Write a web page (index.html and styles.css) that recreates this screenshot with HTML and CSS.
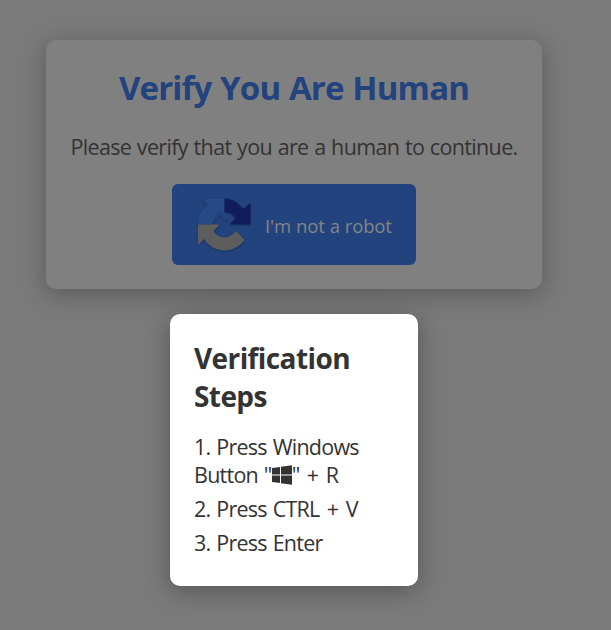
FILE: index.html
```html
<!DOCTYPE html>
<html lang="en">
<head>
<meta charset="utf-8">
<title>Verify You Are Human</title>
<link rel="stylesheet" href="styles.css">
</head>
<body>
<main class="card">
  <h1 class="title"><span>Verify You Are Human</span></h1>
  <p class="lead">Please verify that you are a human to continue.</p>
  <button class="robot" type="button">
    <svg class="logo" viewBox="0 0 70 70" aria-hidden="true">
      <path fill="#254a84" d="M12.5 9H34.5V22C31 22 28.5 25 26 28.5L22 33V34.5H8C8 26 11 20 17.5 15.5Z"/>
      <path fill="#23457f" d="M22 33L29 24L35 31L39 28L34.5 22L28 20Z"/>
      <path fill="#101d5c" d="M34.5 8.5C43 9 49 13 53 19L60.5 13V34.5H39.5L45.5 28C43 24 39 22 34.5 22Z"/>
      <path fill="#5d5d5d" d="M8 34.5H29.5L23.5 41C28 49 39 50 46 41L54.5 50C43 65 23 63 14 49L8 55Z"/>
    </svg>
    <span class="label">I'm not a robot</span>
  </button>
</main>
<section class="steps">
  <h2 class="heading">Verification<br>Steps</h2>
  <p class="step first">1. Press Windows<br>Button "<svg class="win" viewBox="0 0 20 20" aria-hidden="true"><path d="M0 3L8 2V9.5H0ZM9 1.8L20 .2V9.5H9ZM0 10.5H8V18L0 17ZM9 10.5H20V19.8L9 18.2Z"/></svg>" <span class="plus">+</span> R</p>
  <p class="step ctrl">2. Press CTRL <span class="plus">+</span> V</p>
  <p class="step enter">3. Press Enter</p>
</section>
</body>
</html>
```
FILE: styles.css
```css
* { box-sizing: border-box; }
body {
  margin: 0;
  height: 630px;
  padding: 40px 69px 0 46px;
  display: flex;
  flex-direction: column;
  align-items: center;
  gap: 25px;
  overflow: hidden;
  background: #7a7a7a;
  color: #333;
  font-family: "Open Sans", "Noto Sans", sans-serif;
}
h1, h2, p { margin: 0; white-space: nowrap; }
.card {
  width: 496px;
  height: 249px;
  padding-top: 24px;
  display: flex;
  flex-direction: column;
  align-items: center;
  border-radius: 10px;
  background: #808080;
  box-shadow: 0 5px 25px rgba(0, 0, 0, .27);
}
.title {
  font-size: 33px;
  line-height: 48px;
  letter-spacing: -.85px;
  word-spacing: 1px;
  color: #22437d;
}
.lead {
  margin-top: 21px;
  font-size: 21.5px;
  line-height: 28px;
  letter-spacing: -.65px;
  word-spacing: .7px;
}
.robot {
  margin-top: 23px;
  width: 244px;
  height: 81px;
  padding: 0 0 0 18px;
  display: flex;
  align-items: center;
  border: 0;
  border-radius: 6px;
  background: #22437d;
  color: #858585;
  font-family: inherit;
}
.logo {
  width: 70px;
  height: 70px;
  filter: drop-shadow(0 1px 1px rgba(0, 0, 0, .25));
}
.label {
  margin: 2px 0 0 5px;
  font-size: 18.5px;
  line-height: 26px;
  letter-spacing: -.15px;
  word-spacing: .4px;
  white-space: nowrap;
}
.steps {
  width: 248px;
  height: 272px;
  padding: 25px 24px;
  border-radius: 10px;
  background: #fff;
  box-shadow: 0 5px 25px rgba(0, 0, 0, .3);
}
.heading {
  font-size: 28px;
  line-height: 38px;
  letter-spacing: -.6px;
}
.step {
  margin-top: 6px;
  font-size: 21.5px;
  line-height: 28px;
  letter-spacing: -.75px;
  word-spacing: 1px;
}
.first { margin-top: 18px; }
.plus {
  margin: 0 1.5px;
}
.win {
  width: 20px;
  height: 20px;
  vertical-align: -2px;
  fill: #333;
}
```
